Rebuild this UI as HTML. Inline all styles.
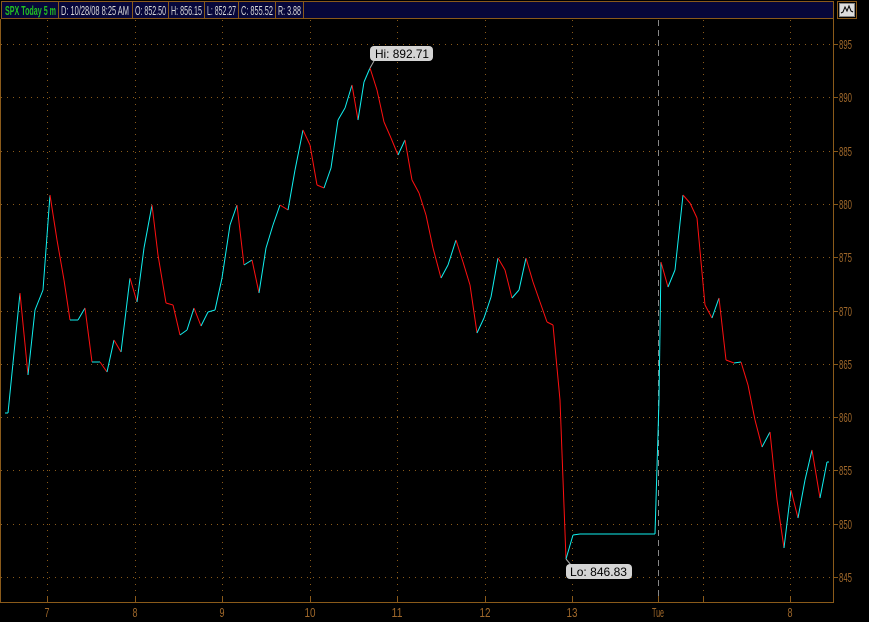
<!DOCTYPE html>
<html><head><meta charset="utf-8"><style>
html,body{margin:0;padding:0;background:#000;width:869px;height:622px;overflow:hidden;font-family:"Liberation Sans",sans-serif}
svg{position:absolute;left:0;top:0}
</style></head><body>
<svg width="869" height="622" viewBox="0 0 869 622" xmlns="http://www.w3.org/2000/svg">
<rect x="0" y="0" width="869" height="622" fill="#000"/>
<g id="grid" stroke="#8a5a1a" stroke-width="1" stroke-dasharray="1,5"></g>
<line x1="658.5" y1="20" x2="658.5" y2="602" stroke="#888" stroke-dasharray="6,4"/>
<g id="line" stroke-width="1" fill="none"></g>
<line x1="833.5" y1="19" x2="833.5" y2="603" stroke="#8a5a1a"/>
<line x1="0" y1="602.5" x2="834" y2="602.5" stroke="#8a5a1a"/>
<line x1="0.5" y1="19" x2="0.5" y2="603" stroke="#8a5a1a"/>
<g id="ticks" stroke="#8a5a1a"></g>
<g id="lbl" fill="#a0682a" font-size="13" font-family="Liberation Sans, sans-serif"></g>
<rect x="1.5" y="1.5" width="832" height="17" fill="#07073a" stroke="#8a5a1a"/>
<g stroke="#8a5a1a"><line x1="58.5" y1="2" x2="58.5" y2="18"/><line x1="132.5" y1="2" x2="132.5" y2="18"/><line x1="168.5" y1="2" x2="168.5" y2="18"/><line x1="204.5" y1="2" x2="204.5" y2="18"/><line x1="238.5" y1="2" x2="238.5" y2="18"/><line x1="275.5" y1="2" x2="275.5" y2="18"/><line x1="303.5" y1="2" x2="303.5" y2="18"/></g>
<g font-size="13" font-family="Liberation Sans, sans-serif">
<text x="5" y="15" fill="#22c022" font-weight="bold" textLength="51" lengthAdjust="spacingAndGlyphs">SPX Today 5 m</text>
<g fill="#d8d8d8">
<text x="61" y="15" textLength="68" lengthAdjust="spacingAndGlyphs">D: 10/28/08 8:25 AM</text>
<text x="135" y="15" textLength="31" lengthAdjust="spacingAndGlyphs">O: 852.50</text>
<text x="171" y="15" textLength="31" lengthAdjust="spacingAndGlyphs">H: 856.15</text>
<text x="207" y="15" textLength="29" lengthAdjust="spacingAndGlyphs">L: 852.27</text>
<text x="241" y="15" textLength="32" lengthAdjust="spacingAndGlyphs">C: 855.52</text>
<text x="278" y="15" textLength="23" lengthAdjust="spacingAndGlyphs">R: 3.88</text></g>
</g>
<rect x="837.5" y="1.5" width="19" height="17" fill="none" stroke="#8a5a1a"/>
<rect x="839.5" y="3.5" width="15" height="13" fill="#ddd" stroke="#888"/>
<polyline points="841,13 843,12 845,7 847,11 849,6 851,11 853,12" fill="none" stroke="#000"/>
<line x1="370" y1="68" x2="374" y2="61" stroke="#aaa"/>
<rect x="370" y="46" width="63" height="15" rx="4" fill="#d4d4d4"/>
<text x="375" y="58" font-size="12" fill="#000" textLength="54" lengthAdjust="spacingAndGlyphs">Hi: 892.71</text>
<line x1="566" y1="559" x2="571" y2="565" stroke="#aaa"/>
<rect x="566" y="564" width="66" height="15" rx="4" fill="#d4d4d4"/>
<text x="570" y="576" font-size="12" fill="#000" textLength="57" lengthAdjust="spacingAndGlyphs">Lo: 846.83</text>
</svg>
<script>
var NS="http://www.w3.org/2000/svg";
function el(p,t,a,txt){var e=document.createElementNS(NS,t);for(var k in a)e.setAttribute(k,a[k]);if(txt)e.textContent=txt;p.appendChild(e);return e;}
var grid=document.getElementById('grid'),ticks=document.getElementById('ticks'),lbl=document.getElementById('lbl');
var xs=[47,135,222,310,397,485,572,703,790];
xs.forEach(function(x){el(grid,'line',{x1:x+.5,y1:20,x2:x+.5,y2:602});el(ticks,'line',{x1:x+.5,y1:596,x2:x+.5,y2:602});});
el(ticks,'line',{x1:658.5,y1:596,x2:658.5,y2:602});
var xl=["7","8","9","10","11","12","13","8"];
[47,135,222,310,397,485,572,790].forEach(function(x,i){el(lbl,'text',{x:x,y:617,'text-anchor':'middle',textLength:x==310||x==397||x==485||x==572?11:5,lengthAdjust:'spacingAndGlyphs'},xl[i]);});
el(lbl,'text',{x:652,y:617,textLength:12,lengthAdjust:'spacingAndGlyphs'},"Tue");
for(var i=0;i<=10;i++){var p=895-5*i,y=Math.round(44+i*53.3);el(grid,'line',{x1:1,y1:y+.5,x2:833,y2:y+.5});el(ticks,'line',{x1:833,y1:y+.5,x2:838,y2:y+.5});el(lbl,'text',{x:839,y:y+5,textLength:13,lengthAdjust:'spacingAndGlyphs'},String(p));}
var pts=[[5,413],[8,413],[20,293],[28,375],[35,310],[43,290],[50,195],[57,240],[64,280],[70,320],[78,320],[85,308],[92,362],[100,362],[107,372],[114,340],[121,352],[130,278],[137,302],[144,248],[152,205],[158,255],[166,303],[173,305],[180,335],[187,330],[194,308],[201,326],[208,312],[215,310],[222,278],[230,225],[237,205],[244,265],[252,260],[259,293],[266,248],[273,225],[280,205],[288,210],[295,170],[303,130],[310,145],[317,185],[324,188],[331,168],[338,120],[345,108],[352,85],[358,120],[364,82],[370,68],[377,90],[384,122],[391,138],[398,155],[405,140],[412,180],[419,193],[426,215],[433,248],[441,278],[448,265],[456,240],[463,262],[470,285],[477,333],[484,318],[491,297],[498,258],[505,270],[512,298],[519,290],[526,258],[533,282],[540,302],[547,322],[553,325],[560,400],[566,559],[573,535],[580,534],[655,534],[659,400],[661,262],[668,287],[675,270],[683,195],[690,203],[697,218],[705,305],[712,318],[719,298],[726,360],[734,363],[741,362],[748,385],[755,420],[762,447],[770,432],[777,500],[784,548],[791,490],[798,518],[805,480],[812,450],[820,498],[827,462],[829,462]];
var L=document.getElementById('line');
for(var j=1;j<pts.length;j++){var a=pts[j-1],b=pts[j];el(L,'line',{x1:a[0],y1:a[1],x2:b[0],y2:b[1],stroke:b[1]>a[1]?'#ff1010':'#10f0f0'});}
</script>
</body></html>
